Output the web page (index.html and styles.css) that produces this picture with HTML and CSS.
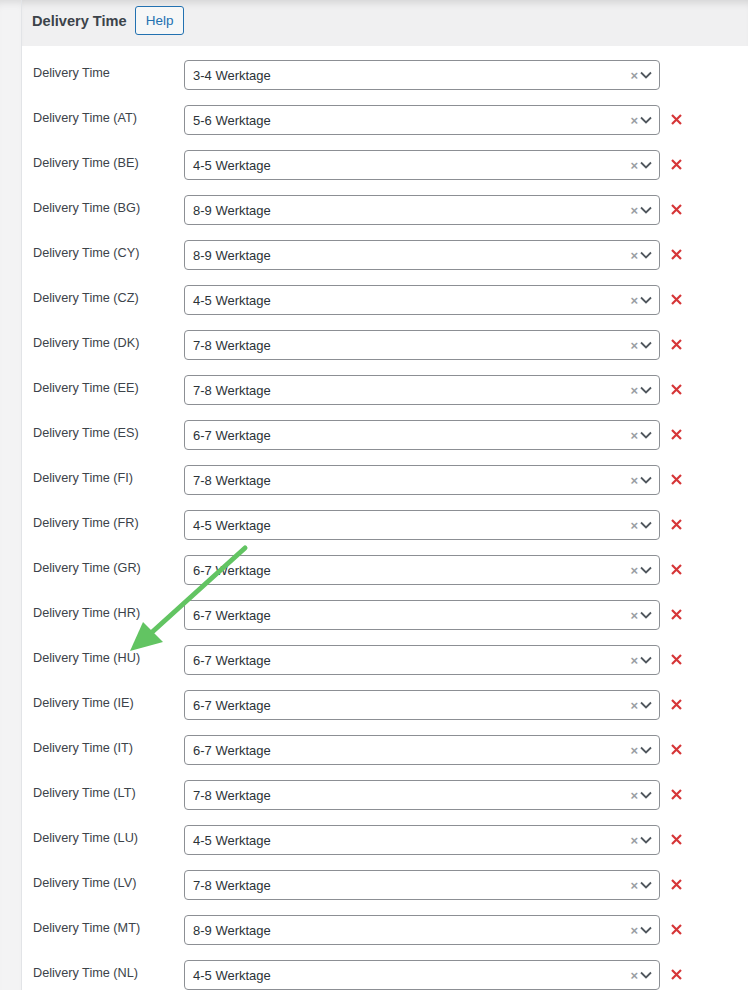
FILE: index.html
```html
<!DOCTYPE html>
<html lang="en">
<head>
  <meta charset="UTF-8" />
  <title>Delivery Time</title>
  <link rel="stylesheet" href="styles.css">
</head>
<body>
  <div class="page">
    <div class="gutter"></div>
    <div class="panel">
      <div class="panel-head">
        <h2>Delivery Time</h2>
        <button class="help-btn">Help</button>
      </div>
      <div class="panel-body" id="rows"></div>
    </div>
  </div>

  <svg class="arrow" width="748" height="990" viewBox="0 0 748 990">
    <line x1="245" y1="548" x2="150" y2="634" stroke="#62c462" stroke-width="5" stroke-linecap="round"/>
    <polygon points="130,651 143,622 163,642" fill="#62c462"/>
  </svg>

  <script>
    const rows = [
      ["", "3-4"], ["AT", "5-6"], ["BE", "4-5"], ["BG", "8-9"], ["CY", "8-9"],
      ["CZ", "4-5"], ["DK", "7-8"], ["EE", "7-8"], ["ES", "6-7"], ["FI", "7-8"],
      ["FR", "4-5"], ["GR", "6-7"], ["HR", "6-7"], ["HU", "6-7"], ["IE", "6-7"],
      ["IT", "6-7"], ["LT", "7-8"], ["LU", "4-5"], ["LV", "7-8"], ["MT", "8-9"],
      ["NL", "4-5"]
    ];

    const chevron = '<svg width="14" height="10" viewBox="0 0 14 10"><path d="M2 2.5l5 5 5-5" fill="none" stroke="#50575e" stroke-width="1.8"/></svg>';
    const remove = '<svg width="13" height="13" viewBox="0 0 13 13"><path d="M2 2l9 9M11 2l-9 9" stroke="#d63638" stroke-width="2.2"/></svg>';

    let html = "";
    rows.forEach(([code, value]) => {
      const label = code ? `Delivery Time (${code})` : "Delivery Time";
      html += `<div class="row">
        <label>${label}</label>
        <div class="select">
          <span class="value">${value} Werktage</span>
          <span class="clear">×</span>${chevron}
        </div>
        ${code ? `<span class="remove">${remove}</span>` : ""}
      </div>`;
    });
    document.getElementById('rows').innerHTML = html;
  </script>
</body>
</html>
```

FILE: styles.css
```css
body {
  margin: 0;
  font-family: "Liberation Sans", Arial, sans-serif;
  color: #3c434a;
  background: #fff;
  height: 990px;
  overflow: hidden;
}
.page {
  display: flex;
  min-height: 990px;
}
.gutter {
  width: 21px;
  background: #f3f3f4;
  border-right: 1px solid #e2e4e7;
  box-shadow: inset 0 8px 8px -6px rgba(0,0,0,0.12);
}
.panel {
  flex: 1;
}
.panel-head {
  height: 46px;
  display: flex;
  align-items: center;
  gap: 8px;
  padding: 0 10px;
  background: #f0f0f1;
  box-shadow: inset 0 8px 8px -6px rgba(0,0,0,0.14);
}
.panel-head h2 {
  margin: 0;
  margin-top: -4px;
  font-size: 14.6px;
  font-weight: bold;
  color: #3c434a;
}
.help-btn {
  height: 29px;
  padding: 0 10px;
  margin-top: -5px;
  border: 1px solid #2271b1;
  border-radius: 3px;
  background: #f6f7f7;
  color: #2271b1;
  font-family: inherit;
  font-size: 13.5px;
}
.panel-body {
  padding: 7px 0 0 11px;
}
.row {
  display: flex;
  align-items: flex-start;
  padding: 7px 0 8px;
}
.row label {
  width: 151px;
  padding-top: 5px;
  font-size: 12.7px;
  line-height: 16px;
  color: #3c434a;
}
.select {
  width: 460px;
  height: 28px;
  display: flex;
  align-items: center;
  padding: 0 6px 0 8px;
  border: 1px solid #8c8f94;
  border-radius: 4px;
  box-sizing: content-box;
}
.value {
  flex: 1;
  font-size: 13px;
  color: #2c3338;
  padding-top: 1px;
}
.clear {
  color: #999ea3;
  font-size: 13px;
  font-weight: bold;
  margin-right: 1px;
}
.remove {
  display: flex;
  align-items: center;
  height: 30px;
  margin-left: 10px;
}
.remove svg {
  margin-top: -2px;
}
.arrow {
  position: absolute;
  top: 0;
  left: 0;
  pointer-events: none;
}
```
